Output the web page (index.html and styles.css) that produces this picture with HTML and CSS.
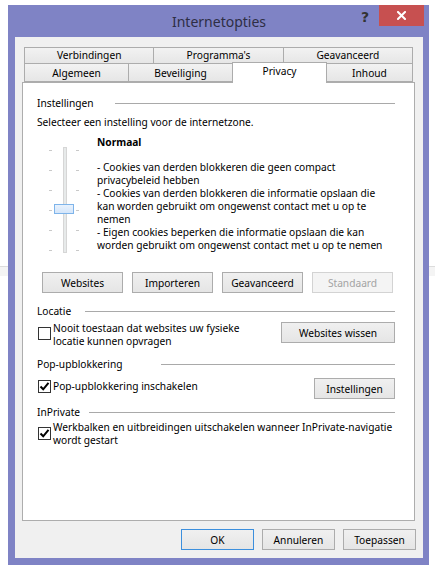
FILE: index.html
```html
<!DOCTYPE html>
<html lang="nl">
<head>
  <meta charset="UTF-8">
  <title>Internetopties</title>
  <link rel="stylesheet" href="styles.css">
</head>
<body>
  <div class="window">
    <div class="titlebar">
      <span></span>
      <span class="title">Internetopties</span>
      <div class="caption-buttons">
        <span class="help">?</span>
        <span class="close">
          <svg width="9" height="9" viewBox="0 0 9 9"><path d="M1 1 L8 8 M8 1 L1 8" stroke="#fff" stroke-width="2" stroke-linecap="square"/></svg>
        </span>
      </div>
    </div>

    <div class="client">
      <div class="tabs">
        <div class="tabrow row1">
          <div class="tab">Verbindingen</div>
          <div class="tab">Programma's</div>
          <div class="tab">Geavanceerd</div>
        </div>
        <div class="tabrow row2">
          <div class="tab t-alg">Algemeen</div>
          <div class="tab t-bev">Beveiliging</div>
          <div class="tab active">Privacy</div>
          <div class="tab t-inh">Inhoud</div>
        </div>
      </div>

      <div class="panel">
        <div class="group-head">
          <span class="gh-label w-inst">Instellingen</span>
          <span class="gh-line"></span>
        </div>
        <div class="intro">Selecteer een instelling voor de internetzone.</div>

        <div class="slider-row">
          <div class="slider">
            <div class="ticks"><i></i><i></i><i></i><i></i><i></i><i></i></div>
            <div class="track"></div>
            <div class="ticks right"><i></i><i></i><i></i><i></i><i></i><i></i></div>
            <div class="thumb"></div>
          </div>
          <div class="level">
            <div class="level-name">Normaal</div>
            <div class="desc">
              - Cookies van derden blokkeren die geen compact<br>
              privacybeleid hebben<br>
              - Cookies van derden blokkeren die informatie opslaan die<br>
              kan worden gebruikt om ongewenst contact met u op te<br>
              nemen<br>
              - Eigen cookies beperken die informatie opslaan die kan<br>
              worden gebruikt om ongewenst contact met u op te nemen
            </div>
          </div>
        </div>

        <div class="btn-row">
          <button class="btn">Websites</button>
          <button class="btn">Importeren</button>
          <button class="btn">Geavanceerd</button>
          <button class="btn" disabled>Standaard</button>
        </div>

        <div class="group-head gh-loc">
          <span class="gh-label w-loc">Locatie</span>
          <span class="gh-line"></span>
        </div>
        <div class="check-row row-loc">
          <label class="check">
            <span class="box"></span>
            <span class="check-text">Nooit toestaan dat websites uw fysieke<br>locatie kunnen opvragen</span>
          </label>
          <button class="btn wide">Websites wissen</button>
        </div>

        <div class="group-head gh-pop">
          <span class="gh-label w-pop">Pop-upblokkering</span>
          <span class="gh-line"></span>
        </div>
        <div class="check-row row-pop">
          <label class="check">
            <span class="box checked"><svg width="11" height="11" viewBox="0 0 11 11"><path d="M1.5 5.5 L4.2 8.3 L9.5 1.8" fill="none" stroke="#000" stroke-width="2"/></svg></span>
            <span class="check-text">Pop-upblokkering inschakelen</span>
          </label>
          <button class="btn">Instellingen</button>
        </div>

        <div class="group-head gh-priv">
          <span class="gh-label w-priv">InPrivate</span>
          <span class="gh-line"></span>
        </div>
        <div class="check-row row-priv">
          <label class="check">
            <span class="box checked"><svg width="11" height="11" viewBox="0 0 11 11"><path d="M1.5 5.5 L4.2 8.3 L9.5 1.8" fill="none" stroke="#000" stroke-width="2"/></svg></span>
            <span class="check-text">Werkbalken en uitbreidingen uitschakelen wanneer InPrivate-navigatie<br>wordt gestart</span>
          </label>
        </div>
      </div>

      <div class="dialog-buttons">
        <button class="btn dlg default">OK</button>
        <button class="btn dlg">Annuleren</button>
        <button class="btn dlg">Toepassen</button>
      </div>
    </div>
  </div>
</body>
</html>
```

FILE: styles.css
```css
body { margin: 0; background: #fff linear-gradient(to bottom, transparent 266px, #dcdcdc 266px, #dcdcdc 267px, #f4f4f4 267px, #f4f4f4 276px, transparent 276px); height: 575px; font-family: "Noto Sans", sans-serif; font-size: 10.2px; color: #000; }

.window { margin: 5px 0 0 8px; width: 421px; height: 560px; box-sizing: border-box; background: #7f83c5; padding: 0 6px 7px 7px; }

.titlebar { height: 32px; display: grid; grid-template-columns: 1fr auto 1fr; }
.title { font-size: 14px; line-height: 32px; padding-top: 1px; color: #2e2e44; }
.caption-buttons { display: flex; justify-content: flex-end; align-items: flex-start; margin-right: -1px; }
.help { font-weight: bold; font-size: 14px; color: #333; margin-top: 4px; margin-right: 10px; font-family: "DejaVu Sans", sans-serif; }
.close { width: 45px; height: 21px; background: #c75050; display: flex; align-items: center; justify-content: center; }

.client { background: #f0f0f0; height: 521px; box-sizing: border-box; padding: 10px 8px 0 7px; }

.tabs { margin: 0 2px; }
.tabrow { display: flex; }
.row1 { height: 17px; }
.row2 { height: 19px; margin-top: -1px; align-items: flex-end; }
.tab { box-sizing: border-box; border: 1px solid #acacac; background: linear-gradient(#f2f2f2, #e6e6e6); text-align: center; line-height: 15px; height: 100%; margin-left: -1px; }
.tab:first-child { margin-left: 0; }
.row1 .tab { flex: 1; }
.row2 .tab { padding-top: 2px; }
.t-alg { width: 105px; }
.t-bev { width: 105px; }
.t-inh { flex: 1; }
.tab.active { width: 95px; height: 21px; margin-bottom: -1px; background: #fff; border-bottom: none; position: relative; z-index: 2; padding-top: 1px; }

.panel { height: 439px; box-sizing: border-box; border: 1px solid #adadad; background: #fff; padding: 12px 19px 0 14px; }

.group-head { display: flex; align-items: center; height: 15px; }
.gh-line { flex: 1; border-top: 1px solid #a9a9a9; margin-top: 1px; }
.w-inst { width: 78px; }
.w-loc { width: 48px; }
.w-pop { width: 124px; }
.w-priv { width: 52px; }
.gh-loc { margin-top: 10px; }
.gh-pop { margin-top: 8px; }
.gh-priv { margin-top: 5px; }

.intro { margin-top: 6px; line-height: 13px; }

.slider-row { display: flex; margin-top: 7px; }
.slider { width: 60px; height: 118px; position: relative; display: flex; padding-left: 12px; box-sizing: border-box; }
.ticks { width: 3px; margin-top: 14px; height: 101px; display: flex; flex-direction: column; justify-content: space-between; }
.ticks i { display: block; height: 1px; background: #c9c9c9; }
.ticks.right { margin-left: 9px; }
.track { width: 4px; height: 106px; margin: 11px 0 0 11px; box-sizing: border-box; background: #e7eaea; border: 1px solid #d6d6d6; }
.thumb { position: absolute; left: 17px; top: 68px; width: 20px; height: 10px; box-sizing: border-box; background: linear-gradient(#e8f2fd, #d4e6fa); border: 1px solid #7eb4ea; }

.level { line-height: 13px; }
.level-name { font-weight: bold; }
.desc { margin-top: 12px; }

.btn { font-family: inherit; font-size: 10.2px; color: #000; height: 21px; padding: 0; box-sizing: border-box; border: 1px solid #acacac; background: linear-gradient(#f0f0f0, #e5e5e5); }
.btn:disabled { color: #a3a3a3; border-color: #d3d3d3; background: #f4f4f4; }
.btn-row { display: flex; gap: 9px; margin: 18px 0 0 5px; }
.btn-row .btn { width: 81px; }

.check-row { display: flex; justify-content: space-between; align-items: flex-start; line-height: 13px; }
.row-loc { margin-top: 4px; }
.row-pop { margin-top: 7px; }
.row-priv { margin-top: 2px; }
.check { display: flex; align-items: flex-start; gap: 2px; padding-left: 1px; }
.box { width: 13px; height: 13px; box-sizing: border-box; border: 1px solid #333; background: #fff; display: flex; align-items: center; justify-content: center; flex-shrink: 0; }
.row-loc .box { margin-top: 5px; }
.row-pop .check { margin-top: 2px; }
.row-priv .box { margin-top: 6px; }
.btn.wide { width: 114px; }
.row-pop .btn { width: 81px; }

.dialog-buttons { display: flex; justify-content: flex-end; gap: 8px; margin: 8px -1px 0 0; }
.btn.dlg { width: 73px; }
.btn.default { border-color: #3c8fdd; }
```
